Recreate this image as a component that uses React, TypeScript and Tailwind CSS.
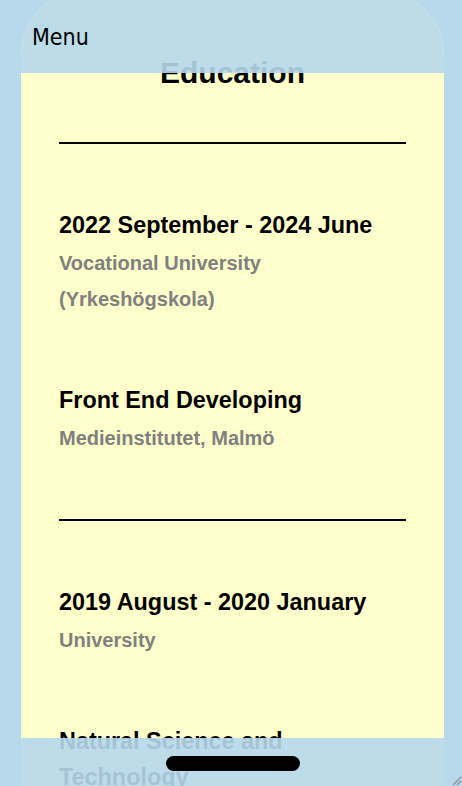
import React from 'react';

type Entry = { title: string; place: string };

const sections: Entry[][] = [
  [
    { title: '2022 September - 2024 June', place: 'Vocational University (Yrkeshögskola)' },
    { title: 'Front End Developing', place: 'Medieinstitutet, Malmö' },
  ],
  [
    { title: '2019 August - 2020 January', place: 'University' },
    { title: 'Natural Science and Technology', place: 'Lund University' },
  ],
];

const App: React.FC = () => {
  return (
    <div className="relative h-[786px] w-[462px] overflow-hidden bg-[#b8d8ec]">
      <div className="relative ml-[21px] -mt-[9px] h-[795px] w-[423px] overflow-hidden rounded-t-[64px] bg-[#ffffcc] font-['Liberation_Sans',Arial,sans-serif]">
        {/* scrolling content */}
        <main className="px-[38px] pt-[64px]">
          <h2 className="text-center text-[30px] font-bold leading-[36px] text-black">Education</h2>
          {sections.map((entries, i) => (
            <section key={i} className={i === 0 ? 'mt-[51px]' : 'mt-[63px]'}>
              <div className="h-[2px] bg-black" />
              {entries.map((e, j) => (
                <div key={e.title} className={j === 0 ? 'mt-[63px]' : 'mt-[65px]'}>
                  <h3 className="text-[23.4px] font-bold leading-[36px] text-black">{e.title}</h3>
                  <p className="mt-[2px] text-[20px] font-bold leading-[36px] text-[#808080]">{e.place}</p>
                </div>
              ))}
            </section>
          ))}
        </main>

        {/* top menu bar */}
        <header className="absolute inset-x-0 top-0 h-[82px] bg-[#b6d8ec]/90 pl-[11px] pt-[32px]">
          <span className="block font-['DejaVu_Sans_Condensed','DejaVu_Sans',sans-serif] text-[23px] leading-[28px] text-black">
            Menu
          </span>
        </header>

        {/* bottom home bar */}
        <div className="absolute inset-x-0 bottom-0 h-[48px] bg-[#b6d8ec]/90 pt-[18px]">
          <div className="mx-auto h-[15px] w-[134px] rounded-full bg-black" />
        </div>
      </div>

      {/* resize grip */}
      <svg className="absolute bottom-0 right-0" width="12" height="12" viewBox="0 0 12 12">
        <path d="M11 3 L3 11 M11 7 L7 11" stroke="#8a8a8a" strokeWidth="1.2" />
      </svg>
    </div>
  );
};

export default App;
